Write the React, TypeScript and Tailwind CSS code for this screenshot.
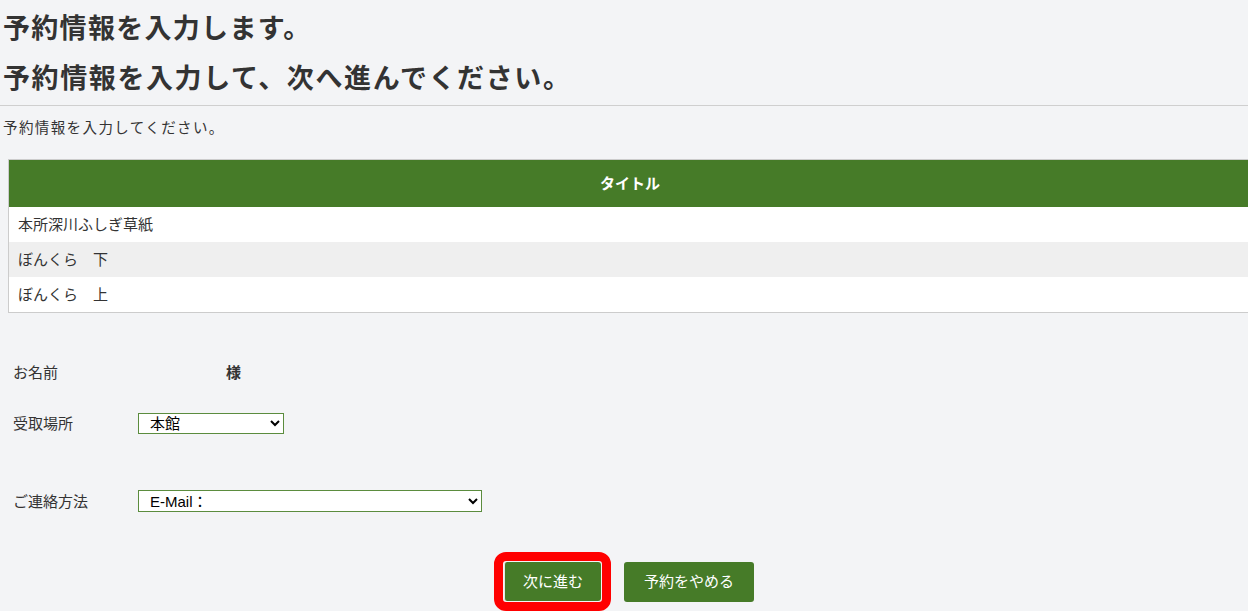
import React from "react";

const font = { fontFamily: '"Noto Sans CJK JP", "Liberation Sans", sans-serif' };

const titles = ["本所深川ふしぎ草紙", "ぼんくら　下", "ぼんくら　上"];

export default function App() {
  return (
    <div
      className="relative h-[611px] w-[1248px] overflow-hidden bg-[#f3f4f6] text-[#333]"
      style={font}
    >
      <h1 className="mt-[11px] pl-[3px] text-[27px] font-bold leading-[32px] tracking-[1.3px]">
        予約情報を入力します。
      </h1>
      <h2 className="mt-[18px] pl-[3px] text-[27px] font-bold leading-[32px] tracking-[1.6px]">
        予約情報を入力して、次へ進んでください。
      </h2>
      <div className="mt-[12px] h-px w-full bg-[#cfcfcf]" />
      <p className="mt-[11px] pl-[3px] text-[14.5px] leading-[20px] tracking-[1.4px]">
        予約情報を入力してください。
      </p>

      <div className="ml-[8px] mt-[22px] w-[1244px] border border-[#cccccc]">
        <div className="flex h-[47px] items-center justify-center bg-[#467b28] text-[15px] font-bold text-white">
          タイトル
        </div>
        {titles.map((t, i) => (
          <div
            key={t}
            className={`flex h-[35px] items-center pl-[9px] text-[15px] ${
              i % 2 === 1 ? "bg-[#efefef]" : "bg-white"
            }`}
          >
            {t}
          </div>
        ))}
      </div>

      <div className="mt-[49px] flex h-[20px] items-center text-[15px]">
        <div className="w-[138px] pl-[13px]">お名前</div>
        <div className="pl-[88px] font-bold">様</div>
      </div>

      <div className="mt-[30px] flex h-[22px] items-center text-[15px]">
        <div className="w-[138px] pl-[13px]">受取場所</div>
        <select className="h-[21px] w-[146px] border border-[#5b8c3e] bg-white py-0 pl-[7px] font-['Liberation_Sans','Noto_Sans_CJK_JP',sans-serif] text-[15px] text-black">
          <option>本館</option>
        </select>
      </div>

      <div className="mt-[56px] flex h-[22px] items-center text-[15px]">
        <div className="w-[138px] pl-[13px]">ご連絡方法</div>
        <select className="h-[22px] w-[344px] border border-[#5b8c3e] bg-white py-0 pl-[7px] font-['Liberation_Sans','Noto_Sans_CJK_JP',sans-serif] text-[15px] text-black">
          <option>E-Mail：</option>
        </select>
      </div>

      <div className="mt-[40px] flex items-center justify-center gap-[13px]">
        <div className="rounded-[12px] border-[9px] border-[#ff0000] p-[1px]">
          <button className="h-[39px] w-[97px] rounded-[3px] border-l border-[#e5e5e5] bg-[#467b28] text-[15px] text-white">
            次に進む
          </button>
        </div>
        <button className="h-[40px] w-[130px] rounded-[3px] bg-[#467b28] text-[15px] text-white">
          予約をやめる
        </button>
      </div>
    </div>
  );
}
